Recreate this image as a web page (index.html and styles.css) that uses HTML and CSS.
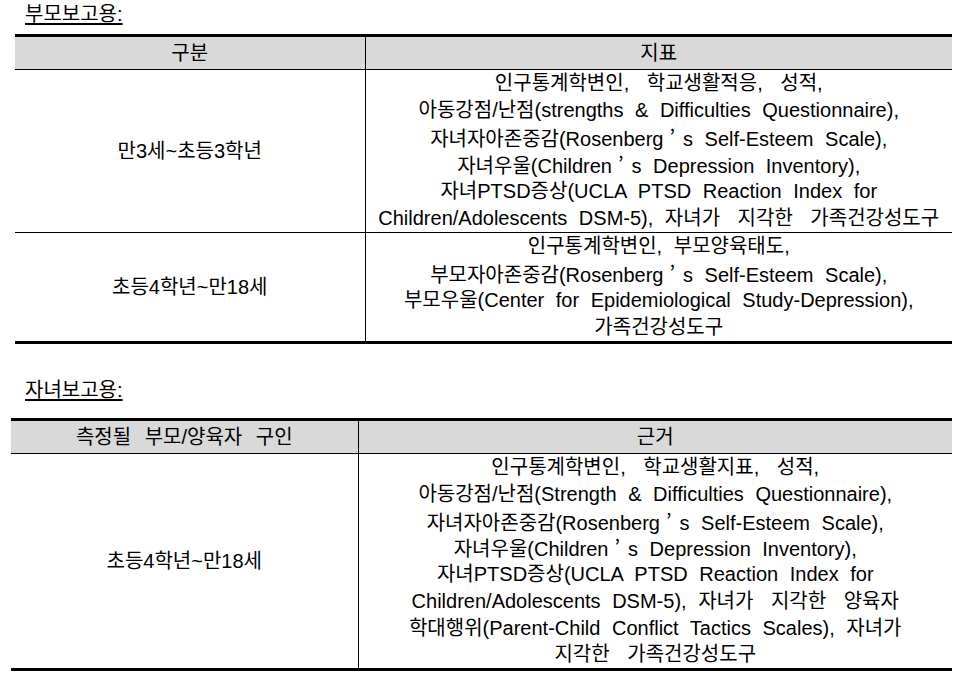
FILE: index.html
```html
<!DOCTYPE html>
<html lang="ko">
<head>
<meta charset="utf-8">
<title>부모보고용 / 자녀보고용</title>
<link rel="stylesheet" href="styles.css">
</head>
<body>
<section class="block block-parent">
  <h2 class="title">부모보고용:</h2>
  <table class="grid grid-parent">
    <colgroup><col class="col-a"><col class="col-b"></colgroup>
    <thead>
      <tr><th>구분</th><th>지표</th></tr>
    </thead>
    <tbody>
      <tr>
        <td>만3세~초등3학년</td>
        <td>
          <span class="ln"><span class="kw">인구통계학변인, 학교생활적응, 성적,</span></span>
          <span class="ln">아동강점/난점(strengths &amp; Difficulties Questionnaire),</span>
          <span class="ln">자녀자아존중감(Rosenberg<span class="q">’</span>s Self-Esteem Scale),</span>
          <span class="ln">자녀우울(Children<span class="q">’</span>s Depression Inventory),</span>
          <span class="ln">자녀PTSD증상(UCLA PTSD Reaction Index for</span>
          <span class="ln">Children/Adolescents DSM-5), <span class="kw">자녀가 지각한 가족건강성도구</span></span>
        </td>
      </tr>
      <tr>
        <td>초등4학년~만18세</td>
        <td>
          <span class="ln">인구통계학변인, 부모양육태도,</span>
          <span class="ln">부모자아존중감(Rosenberg<span class="q">’</span>s Self-Esteem Scale),</span>
          <span class="ln">부모우울(Center for Epidemiological Study-Depression),</span>
          <span class="ln">가족건강성도구</span>
        </td>
      </tr>
    </tbody>
  </table>
</section>
<section class="block block-child">
  <h2 class="title">자녀보고용:</h2>
  <table class="grid grid-child">
    <colgroup><col class="col-a"><col class="col-b"></colgroup>
    <thead>
      <tr><th><span class="hw">측정될 부모/양육자 구인</span></th><th>근거</th></tr>
    </thead>
    <tbody>
      <tr>
        <td>초등4학년~만18세</td>
        <td>
          <span class="ln"><span class="kw">인구통계학변인, 학교생활지표, 성적,</span></span>
          <span class="ln">아동강점/난점(Strength &amp; Difficulties Questionnaire),</span>
          <span class="ln">자녀자아존중감(Rosenberg<span class="q">’</span>s Self-Esteem Scale),</span>
          <span class="ln">자녀우울(Children<span class="q">’</span>s Depression Inventory),</span>
          <span class="ln">자녀PTSD증상(UCLA PTSD Reaction Index for</span>
          <span class="ln">Children/Adolescents DSM-5), <span class="kw">자녀가 지각한 양육자</span></span>
          <span class="ln">학대행위(Parent-Child Conflict Tactics Scales), 자녀가</span>
          <span class="ln"><span class="kw">지각한 가족건강성도구</span></span>
        </td>
      </tr>
    </tbody>
  </table>
</section>
</body>
</html>
```

FILE: styles.css
```css
html, body {
  margin: 0;
  padding: 0;
  background: #ffffff;
}

body {
  font-family: "Liberation Sans", "Noto Sans CJK KR", sans-serif;
  font-size: 20px;
  color: #000000;
  width: 954px;
}

.block {
  display: block;
}

.block-child {
  margin-top: 32px;
}

.title {
  margin: 0;
  height: 34px;
  padding-left: 25px;
  font-size: 20px;
  font-weight: normal;
  line-height: 29px;
  text-decoration: underline;
  text-underline-offset: 2px;
  box-sizing: border-box;
}

.block-child .title {
  height: 42px;
}

.grid {
  border-collapse: collapse;
  table-layout: fixed;
  border-spacing: 0;
}

.grid-parent {
  width: 937px;
  margin-left: 15px;
}

.grid-parent .col-a {
  width: 350px;
}

.grid-child {
  width: 941px;
  margin-left: 11px;
}

.grid-child .col-a {
  width: 347px;
}

.grid th {
  background: #d9d9d9;
  font-weight: normal;
  height: 32px;
  padding: 0;
  line-height: 27px;
  border-top: 3px solid #000000;
  border-bottom: 1px solid #000000;
  text-align: center;
  vertical-align: middle;
}

.grid th + th,
.grid td + td {
  border-left: 1px solid #000000;
}

.grid td {
  padding: 0;
  line-height: 27px;
  text-align: center;
  vertical-align: middle;
  border-bottom: 1px solid #000000;
  word-spacing: 6px;
}

.grid tbody tr:last-child td {
  border-bottom: 3px solid #000000;
}

.ln {
  display: block;
  height: 27px;
  line-height: 27px;
  white-space: nowrap;
}

.grid-child .ln {
  height: 26.75px;
}

.kw {
  word-spacing: 12px;
}

.hw {
  word-spacing: 8px;
}

.q {
  font-family: "Noto Sans CJK KR", sans-serif;
  margin: 0 8px 0 6px;
}
```
